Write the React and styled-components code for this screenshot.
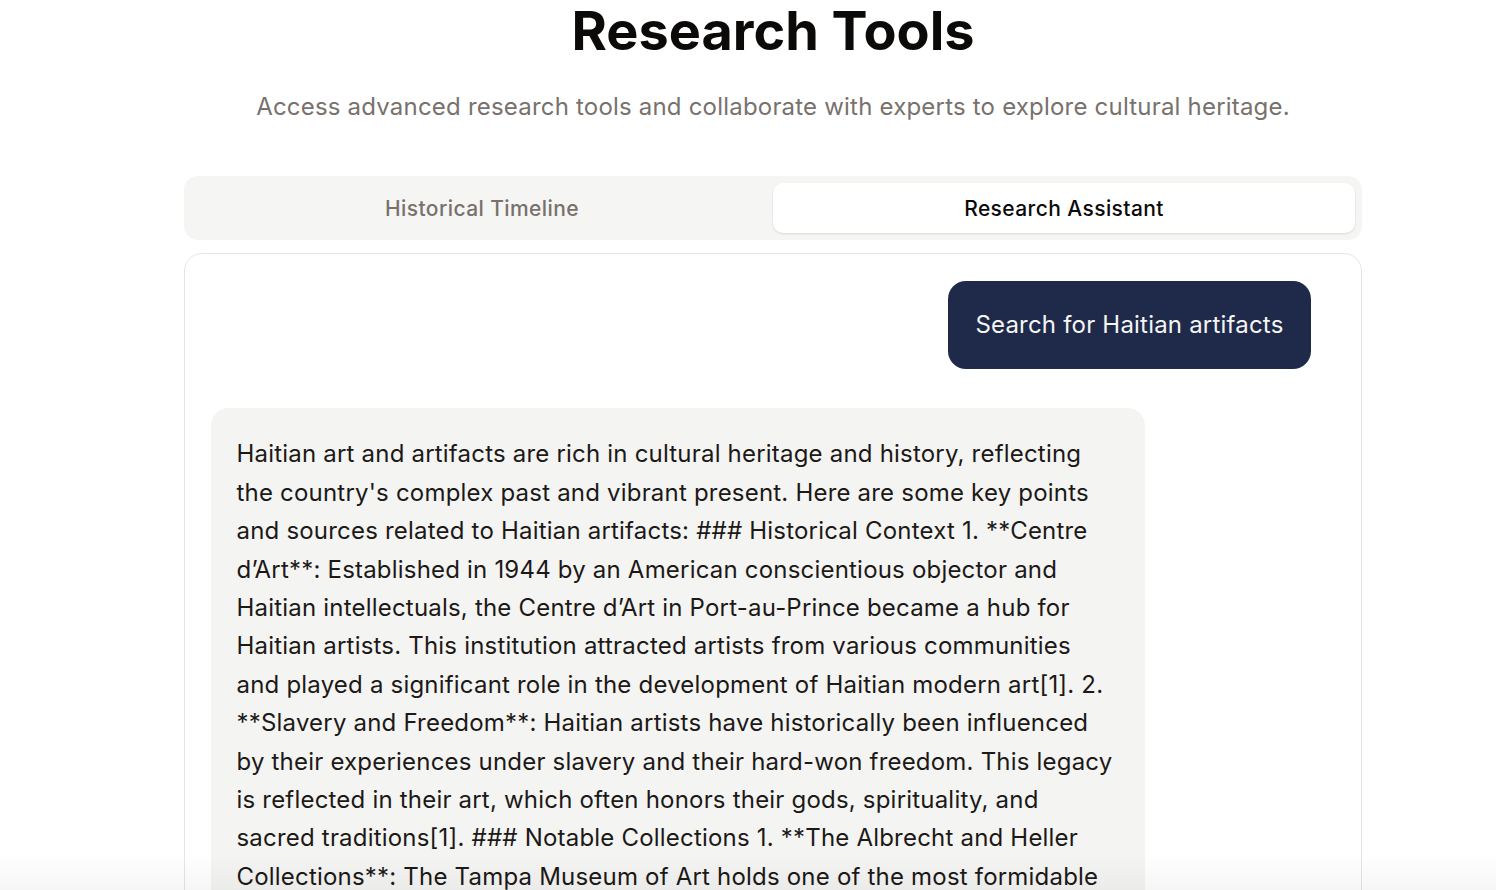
import React from "react";
import styled, { createGlobalStyle } from "styled-components";

const GlobalStyle = createGlobalStyle`
  html, body { margin: 0; padding: 0; background: #ffffff; }
  body { font-family: Inter, "Noto Sans", Arial, sans-serif; color: #1c1917; overflow: hidden; }
  * { box-sizing: border-box; }
`;

const Page = styled.div`
  height: 890px;
  overflow: hidden;
  padding-left: 50px;
`;

const Main = styled.main`
  width: 1178px;
  margin: 0 auto;
  display: flex;
  flex-direction: column;
`;

const Title = styled.h1`
  margin: 1px 0 0;
  font-size: 54px;
  line-height: 1.1;
  font-weight: 700;
  letter-spacing: 0;
  text-align: center;
  color: #0c0a09;
`;

const Subtitle = styled.p`
  margin: 29px 0 0;
  font-size: 24px;
  line-height: 36px;
  font-weight: 400;
  letter-spacing: 0.2px;
  text-align: center;
  color: #78716c;
`;

const TabList = styled.div`
  margin-top: 51px;
  height: 64px;
  padding: 7px;
  border-radius: 14px;
  background: #f5f5f4;
  display: grid;
  grid-template-columns: 1fr 1fr;
`;

const Tab = styled.button`
  border: none;
  border-radius: 10px;
  font-family: inherit;
  font-size: 21px;
  font-weight: 500;
  letter-spacing: 0.4px;
  background: ${(p) => (p.$active ? "#ffffff" : "transparent")};
  color: ${(p) => (p.$active ? "#0c0a09" : "#78716c")};
  box-shadow: ${(p) => (p.$active ? "0 1px 3px rgba(0,0,0,0.08), 0 1px 2px rgba(0,0,0,0.04)" : "none")};
  cursor: pointer;
`;

const Card = styled.section`
  margin-top: 13px;
  border: 1.5px solid #e7e5e4;
  border-radius: 18px;
  padding: 26.5px 50.5px 0 25.5px;
  display: flex;
  flex-direction: column;
  gap: 39px;
  height: 700px;
`;

const Bubble = styled.div`
  font-size: 24px;
  line-height: 38.4px;
  letter-spacing: 0.2px;
  border-radius: 18px;
  ${(p) =>
    p.$user
      ? `
    align-self: flex-end;
    background: #1f2a4a;
    color: #f5f5f4;
    padding: 25px 27px;
  `
      : `
    align-self: flex-start;
    max-width: 934px;
    background: #f4f4f3;
    color: #1c1917;
    padding: 27px 26px 26px;
  `}
`;

const BottomFade = styled.div`
  position: fixed;
  left: 0;
  right: 0;
  bottom: 0;
  height: 36px;
  pointer-events: none;
  background: linear-gradient(to bottom, rgba(0,0,0,0), rgba(0,0,0,0.035));
`;

const answer =
  "Haitian art and artifacts are rich in cultural heritage and history, reflecting the country's complex past and vibrant present. Here are some key points and sources related to Haitian artifacts: ### Historical Context 1. **Centre d\u2019Art**: Established in 1944 by an American conscientious objector and Haitian intellectuals, the Centre d\u2019Art in Port-au-Prince became a hub for Haitian artists. This institution attracted artists from various communities and played a significant role in the development of Haitian modern art[1]. 2. **Slavery and Freedom**: Haitian artists have historically been influenced by their experiences under slavery and their hard-won freedom. This legacy is reflected in their art, which often honors their gods, spirituality, and sacred traditions[1]. ### Notable Collections 1. **The Albrecht and Heller Collections**: The Tampa Museum of Art holds one of the most formidable collections of Haitian art in the United States, featuring works by many of the country's most celebrated painters and sculptors[2].";

export default function App() {
  return (
    <>
      <GlobalStyle />
      <Page>
        <Main>
          <Title>Research Tools</Title>
          <Subtitle>
            Access advanced research tools and collaborate with experts to explore cultural heritage.
          </Subtitle>
          <TabList>
            <Tab>Historical Timeline</Tab>
            <Tab $active>Research Assistant</Tab>
          </TabList>
          <Card>
            <Bubble $user>Search for Haitian artifacts</Bubble>
            <Bubble>{answer}</Bubble>
          </Card>
        </Main>
      </Page>
      <BottomFade />
    </>
  );
}
